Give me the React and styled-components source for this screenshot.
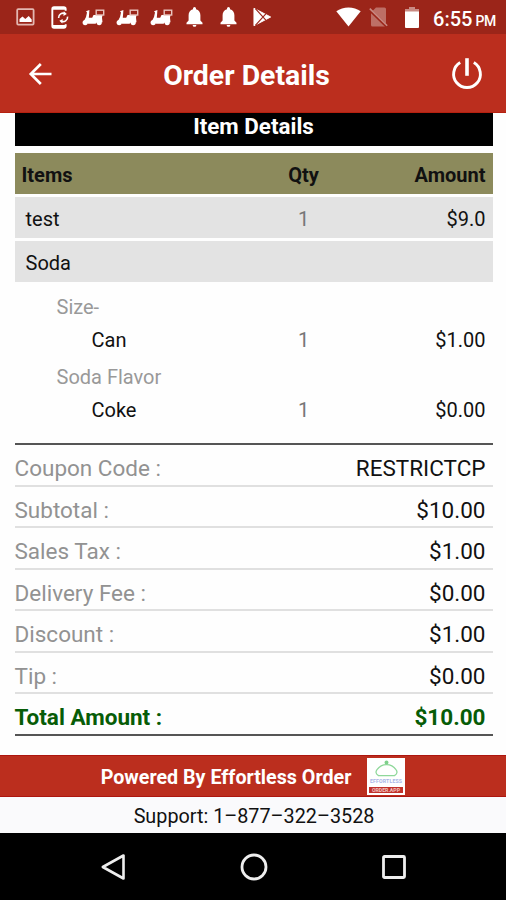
import React from 'react';
import styled, { createGlobalStyle } from 'styled-components';

const GlobalStyle = createGlobalStyle`
    * { box-sizing: border-box; }
    body {
        margin: 0;
        background: #fff;
        font-family: Roboto, sans-serif;
        color: #111;
    }
    svg { display: block; flex: none; }
`

const Screen = styled.div`
    width: 506px;
    height: 900px;
    display: flex;
    flex-direction: column;
    overflow: hidden;
    background: #fefefe;
`

const StatusBar = styled.div`
    height: 34px;
    flex: none;
    display: flex;
    align-items: center;
    justify-content: space-between;
    padding: 0 10px 0 9px;
    background: #9b2519;
    color: #fff;
`

const Notifications = styled.div`
    display: grid;
    grid-template-columns: repeat(8, 33.8px);
    align-items: center;
    justify-items: center;
`

const SystemIcons = styled.div`
    display: flex;
    align-items: center;
    gap: 14px;
`

const Signal = styled.div`
    display: flex;
    align-items: center;
    gap: 8px;
    margin-right: 3px;
`

const Clock = styled.div`
    font-size: 20px;
    font-weight: 500;
    line-height: 34px;
    padding-top: 5px;
    small {
        font-size: 14px;
        margin-left: 3px;
        letter-spacing: -0.3px;
    }
`

const Header = styled.header`
    height: 79px;
    flex: none;
    display: grid;
    grid-template-columns: 80px 1fr 80px;
    align-items: center;
    background: #bb2e1e;
    border-bottom: 1px solid #b5200f;
    color: #fff;
`

const IconButton = styled.button`
    height: 78px;
    border: 0;
    background: none;
    color: inherit;
    display: flex;
    align-items: center;
    justify-content: ${props => props.$end ? 'flex-end' : 'flex-start'};
    padding: ${props => props.$end ? '2px 22px 0 0' : '2px 0 0 28px'};
`

const Title = styled.h1`
    margin: 0 0 0 -13px;
    padding-top: 5px;
    text-align: center;
    font-size: 28.4px;
    font-weight: 700;
    line-height: 30px;
`

const Content = styled.main`
    height: 642px;
    flex: none;
    padding: 0 13.5px 0 14.5px;
`

const SectionTitle = styled.h2`
    margin: 0 0 7px;
    height: 33px;
    background: #000;
    color: #fff;
    text-align: center;
    font-size: 22.4px;
    font-weight: 700;
    line-height: 26px;
`

const ItemRow = styled.div`
    display: grid;
    grid-template-columns: 1fr 60px 152px;
    align-items: center;
    height: ${props => props.$height || 41}px;
    padding: 3px 7px 0 ${props => props.$indent}px;
    margin-bottom: ${props => props.$gap || 0}px;
    font-size: 20px;
    color: ${props => props.$muted ? '#999' : '#111'};
    background: ${props => props.$fill || 'transparent'};
    font-weight: ${props => props.$bold ? 700 : 400};
`

const Qty = styled.span`
    text-align: center;
    color: ${props => props.$head ? '#111' : '#777'};
`

const Amount = styled.span`
    text-align: right;
`

const Options = styled.div`
    height: 163px;
    padding-top: 6px;
    border-bottom: 2px solid #555;
`

const TotalRow = styled.div`
    display: flex;
    justify-content: space-between;
    align-items: center;
    height: 41.5px;
    padding: 6.5px 7px 0 0;
    border-bottom: 2px solid ${props => props.$last ? '#555' : '#e0e0e0'};
    font-size: 22.5px;
    font-weight: ${props => props.$last ? 700 : 400};
    color: ${props => props.$last ? '#075c07' : '#111'};
`

const TotalLabel = styled.span`
    color: ${props => props.$last ? 'inherit' : '#929292'};
`

const PoweredBar = styled.div`
    height: 42px;
    flex: none;
    display: flex;
    align-items: center;
    justify-content: center;
    gap: 16px;
    padding-top: 1px;
    background: #bb2e1e;
    border-top: 1px solid #ad160f;
    border-bottom: 1px solid #ad160f;
    color: #fff;
    font-size: 19.7px;
    font-weight: 700;
`

const PoweredText = styled.span`
    padding-top: 2px;
`

const Support = styled.div`
    height: 36px;
    flex: none;
    background: #fafafc;
    text-align: center;
    font-size: 19.8px;
    line-height: 40px;
    padding-left: 2px;
`

const NavBar = styled.nav`
    height: 67px;
    flex: none;
    display: flex;
    align-items: center;
    justify-content: space-between;
    padding: 0 99px 0 100px;
    background: #000;
`

function ImageIcon() {
    return (
        <svg width="19" height="18" viewBox="0 0 19 18">
            <rect x="1.2" y="1.2" width="16.4" height="15.4" rx="1" fill="none" stroke="#e3b7b1" strokeWidth="1.8" />
            <path d="M3.5 14v-3l3-2.5 2.8 2.5 3.4-3 3 3.4V14z" fill="#fff" />
        </svg>
    )
}

function PhoneSyncIcon() {
    return (
        <svg width="18" height="23" viewBox="0 0 19 24" fill="none" stroke="#fff">
            <path d="M15.5 5V3a1.8 1.8 0 0 0-1.8-1.8H3.2A1.8 1.8 0 0 0 1.4 3v18a1.8 1.8 0 0 0 1.8 1.8h10.5a1.8 1.8 0 0 0 1.8-1.8v-2" strokeWidth="2" />
            <path d="M1.5 2.5h14M1.5 21.2h14" strokeWidth="2.6" />
            <path d="M8 12.5a4.8 4.8 0 0 1 7-4.5M17.5 11a4.8 4.8 0 0 1-7 4.8" strokeWidth="1.7" />
            <path d="M13.5 5.5l3.2 2.8-3.6 2zM12 18.3l-3.2-2.8 3.6-2z" fill="#fff" stroke="none" />
        </svg>
    )
}

function ScooterIcon() {
    return (
        <svg width="23" height="17" viewBox="0 0 23 17">
            <path d="M4 2.2L7.4 1 7.2 4 6.8 8.8h3.4L11.5 6l9-.3-.5 3 .5 4.5h-2.8L16 12.5l-2.5 2.2H6.2L1.6 12.800 4 8l1-4.600z" fill="#fff" />
            <rect x="14.2" y="1.2" width="7.5" height="4.8" fill="#9b2519" stroke="#e9c4be" strokeWidth="1.4" />
            <circle cx="3.2" cy="13.6" r="2.6" fill="#fff" />
            <circle cx="17.2" cy="13.6" r="2.6" fill="#fff" />
        </svg>
    )
}

function BellIcon() {
    return (
        <svg width="17" height="20" viewBox="0 0 17 20" fill="#fff">
            <path d="M8.5 0A1.6 1.6 0 0 0 7 1.6v.7C4.1 3 2.6 5.5 2.6 8.3v5.2L.5 15.8v1.5h16v-1.5l-2.1-2.3V8.3C14.4 5.5 12.9 3 10 2.3v-.7A1.6 1.6 0 0 0 8.5 0z" />
            <path d="M6.6 17.9h3.8a1.9 1.9 0 0 1-3.8 0z" />
        </svg>
    )
}

function PlayStoreIcon() {
    return (
        <svg width="19" height="20" viewBox="0 0 20 20">
            <path d="M1 .8v18.4L18.6 10z" fill="#fff" stroke="#fff" strokeLinejoin="round" />
            <path d="M2.5 1.2L13.5 13.4M2.5 18.8L13.5 6.6" fill="none" stroke="#9b2519" strokeWidth="1.2" />
        </svg>
    )
}

function WifiIcon() {
    return (
        <svg width="25" height="20" viewBox="0 0 25 20">
            <path d="M12.5 19.6L.3 4.3C7-.8 18-.8 24.7 4.3z" fill="#fff" />
        </svg>
    )
}

function NoSimIcon() {
    return (
        <svg width="19" height="20" viewBox="0 0 19 20">
            <path d="M7 .5h8.5A1.5 1.5 0 0 1 17 2v16a1.5 1.5 0 0 1-1.5 1.5h-12A1.5 1.5 0 0 1 2 18V5.5z" fill="#bd6f66" />
            <path d="M0 2.2L18 19.6" stroke="#9b2519" strokeWidth="3" />
            <path d="M.8 1.6L18.2 18.8" stroke="#c98a83" strokeWidth="1.6" />
        </svg>
    )
}

function BatteryIcon() {
    return (
        <svg width="14" height="21" viewBox="0 0 14 21">
            <path d="M4 0h6v2h4v4H0V2h4z" fill="#c98a83" />
            <path d="M0 4.6h14V20a1 1 0 0 1-1 1H1a1 1 0 0 1-1-1z" fill="#fff" />
        </svg>
    )
}

function BackIcon() {
    return (
        <svg width="24" height="24" viewBox="0 0 24 24" fill="none" stroke="#fff" strokeWidth="2.7">
            <path d="M23.5 12H3M12.8 2L2.8 12l10 10" />
        </svg>
    )
}

function PowerIcon() {
    return (
        <svg width="34" height="34" viewBox="0 0 34 34" fill="none" stroke="#fff">
            <path d="M10.2 5.6a13.4 13.4 0 1 0 13.6 0" strokeWidth="2.9" />
            <path d="M17 1.2v17.6" strokeWidth="3.6" />
        </svg>
    )
}

function EffortlessLogo() {
    return (
        <svg width="38" height="37" viewBox="0 0 38 37">
            <rect width="38" height="37" fill="#fff" />
            <path d="M11.5 17.6c-3-1.6-3-4-1.5-6 2.200-3 5.400-5 9.500-5s7.400 2 9.500 5c1.500 2 1.500 4.400-1.500 6z" fill="none" stroke="#8fd89a" strokeWidth="1.3" />
            <circle cx="19.5" cy="4.6" r="2" fill="#7fd08b" />
            <text x="19" y="25" textAnchor="middle" fontSize="5.2" fontWeight="700" textLength="32" fill="#a9b6e6">EFFORTLESS</text>
            <rect x="2" y="29" width="34" height="6" fill="#c1332c" />
            <text x="19" y="34" textAnchor="middle" fontSize="5.2" fontWeight="700" textLength="28" fill="#f2c4c0">ORDER.APP</text>
        </svg>
    )
}

const totals = [
    ['Coupon Code :', 'RESTRICTCP'],
    ['Subtotal :', '$10.00'],
    ['Sales Tax :', '$1.00'],
    ['Delivery Fee :', '$0.00'],
    ['Discount :', '$1.00'],
    ['Tip :', '$0.00'],
    ['Total Amount :', '$10.00'],
]

export default function App() {
    return (
        <Screen>
            <GlobalStyle />
            <StatusBar>
                <Notifications>
                    <ImageIcon />
                    <PhoneSyncIcon />
                    <ScooterIcon />
                    <ScooterIcon />
                    <ScooterIcon />
                    <BellIcon />
                    <BellIcon />
                    <PlayStoreIcon />
                </Notifications>
                <SystemIcons>
                    <Signal>
                        <WifiIcon />
                        <NoSimIcon />
                    </Signal>
                    <BatteryIcon />
                    <Clock>6:55<small>PM</small></Clock>
                </SystemIcons>
            </StatusBar>
            <Header>
                <IconButton aria-label="Back"><BackIcon /></IconButton>
                <Title>Order Details</Title>
                <IconButton $end aria-label="Log out"><PowerIcon /></IconButton>
            </Header>
            <Content>
                <SectionTitle>Item Details</SectionTitle>
                <ItemRow $fill="#8c8a5c" $bold $indent={7} $gap={3}>
                    <span>Items</span>
                    <Qty $head>Qty</Qty>
                    <Amount>Amount</Amount>
                </ItemRow>
                <ItemRow $fill="#e3e3e3" $indent={11} $gap={3}>
                    <span>test</span>
                    <Qty>1</Qty>
                    <Amount>$9.0</Amount>
                </ItemRow>
                <ItemRow $fill="#e3e3e3" $indent={11}>
                    <span>Soda</span>
                </ItemRow>
                <Options>
                    <ItemRow $muted $indent={42} $height={34}><span>Size-</span></ItemRow>
                    <ItemRow $indent={77} $height={33} $gap={3}>
                        <span>Can</span>
                        <Qty>1</Qty>
                        <Amount>$1.00</Amount>
                    </ItemRow>
                    <ItemRow $muted $indent={42} $height={34}><span>Soda Flavor</span></ItemRow>
                    <ItemRow $indent={77} $height={33}>
                        <span>Coke</span>
                        <Qty>1</Qty>
                        <Amount>$0.00</Amount>
                    </ItemRow>
                </Options>
                {totals.map(([label, value], i) => (
                    <TotalRow key={label} $last={i === totals.length - 1}>
                        <TotalLabel $last={i === totals.length - 1}>{label}</TotalLabel>
                        <span>{value}</span>
                    </TotalRow>
                ))}
            </Content>
            <PoweredBar>
                <PoweredText>Powered By Effortless Order</PoweredText>
                <EffortlessLogo />
            </PoweredBar>
            <Support>Support: 1–877–322–3528</Support>
            <NavBar>
                <svg width="26" height="28" viewBox="0 0 26 28">
                    <path d="M23.5 2.5v23L2.8 14z" fill="none" stroke="#eee" strokeWidth="2.6" strokeLinejoin="round" />
                </svg>
                <svg width="28" height="28" viewBox="0 0 28 28">
                    <circle cx="14" cy="14" r="12" fill="none" stroke="#eee" strokeWidth="2.8" />
                </svg>
                <svg width="26" height="26" viewBox="0 0 26 26">
                    <rect x="2.5" y="2.5" width="21" height="21" rx="1" fill="none" stroke="#eee" strokeWidth="2.8" />
                </svg>
            </NavBar>
        </Screen>
    )
}
